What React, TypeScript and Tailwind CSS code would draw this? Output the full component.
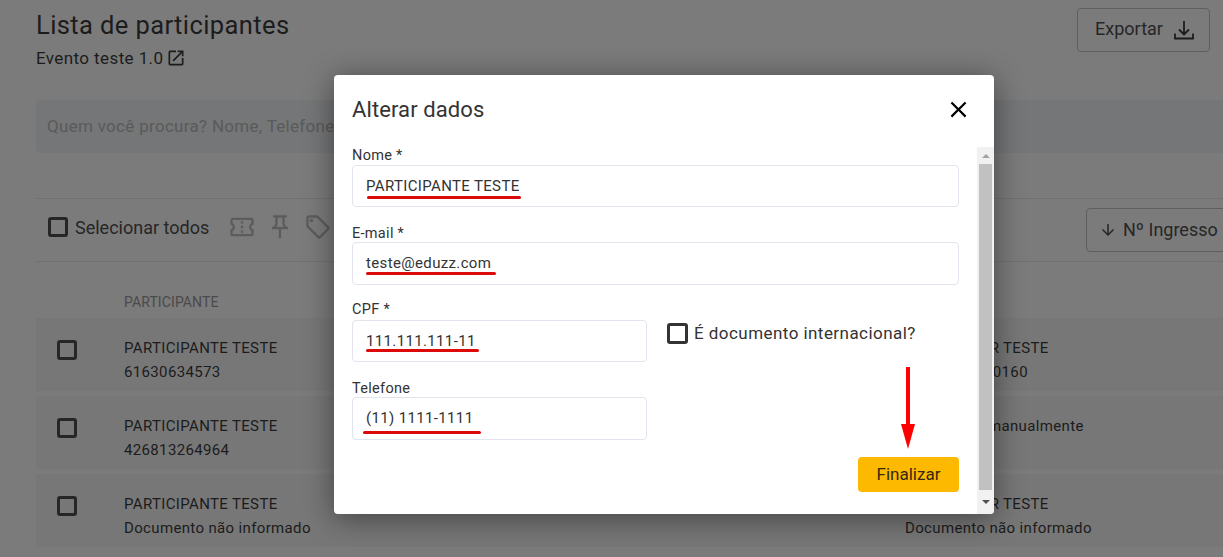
import { MdClose, MdOpenInNew, MdOutlineConfirmationNumber, MdOutlineLocalOffer, MdOutlinePushPin, MdArrowDownward } from 'react-icons/md';

const rows = [
  { name: 'PARTICIPANTE TESTE', doc: '61630634573', buyer: 'COMPRADOR TESTE', buyerDoc: '12345678900160' },
  { name: 'PARTICIPANTE TESTE', doc: '426813264964', buyer: 'Adicionado manualmente', buyerDoc: '' },
  { name: 'PARTICIPANTE TESTE', doc: 'Documento não informado', buyer: 'COMPRADOR TESTE', buyerDoc: 'Documento não informado' },
];

function Checkbox({ color = 'border-[#262626]', size = 'w-5 h-5' }: { color?: string; size?: string }) {
  return <span className={`block shrink-0 rounded-[3px] border-[3px] ${size} ${color}`} />;
}

function Field({ label, value, mark, className, box }: { label: string; value: string; mark: string; className: string; box: string }) {
  return (
    <div className={className}>
      <div className="text-[14.5px] leading-[14px] tracking-[0.3px] text-[#333]">{label}</div>
      <div className={`relative rounded-[4px] border border-[#e3e3ee] pl-[13px] flex items-center text-[15px] tracking-[0.35px] text-[#333] ${box}`}>
        {value}
        <span className={`absolute h-[3px] rounded-full bg-[#dd0a0a] ${mark}`} />
      </div>
    </div>
  );
}

export default function App() {
  return (
    <div className="relative h-[557px] w-[1223px] overflow-hidden bg-[#7b7b7b] font-['Roboto',sans-serif]">
      <div className="pl-9">
        <div className="flex justify-between pr-[13px] pt-2">
          <div>
            <h1 className="text-[25.5px] leading-[34px] tracking-[0.4px] text-[#1c1c1c]">Lista de participantes</h1>
            <div className="mt-[4px] flex items-center gap-[3px] text-[17px] leading-6 tracking-[0.4px] text-[#1c1c1c]">
              Evento teste 1.0
              <MdOpenInNew className="h-5 w-5" />
            </div>
          </div>
          <button className="flex h-11 w-[133px] items-center justify-center gap-[11px] rounded-[4px] border border-[#5f5f5f] pl-[2px] text-[18px] text-[#262626]">
            <span className="-mt-1">Exportar</span>
            <svg viewBox="0 0 20 20" className="h-5 w-5" fill="none" stroke="#1c1c1c" strokeWidth="1.8">
              <path d="M10 1v13M5 9.5l5 5 5-5M1 13.5v5h18v-5" />
            </svg>
          </button>
        </div>

        <div className="mt-[30px] flex h-[53px] items-center rounded-l-[4px] bg-[#747677] pl-[11px] text-[17px] tracking-[0.3px] text-[#5a5a5a]">
          Quem você procura? Nome, Telefone, E-mail
        </div>

        <div className="mt-[45px] flex h-[64px] items-center border-y border-[#717171] pl-3">
          <div className="-mt-[6px] flex items-center">
            <Checkbox />
            <span className="ml-[7px] text-[18px] text-[#262626]">Selecionar todos</span>
            <div className="ml-[19px] flex items-center gap-[10px] text-[#5c5c5c]">
              <MdOutlineConfirmationNumber className="h-7 w-7" />
              <MdOutlinePushPin className="h-7 w-7" />
              <MdOutlineLocalOffer className="h-7 w-7" />
            </div>
          </div>
          <button className="ml-auto -mr-[3px] flex h-11 w-[140px] shrink-0 items-center gap-[6px] rounded-[4px] border border-[#5f5f5f] pl-[12px] text-[18px] text-[#262626]">
            <MdArrowDownward className="h-[18px] w-[18px]" />
            <span className="-mt-[2px]">Nº Ingresso</span>
          </button>
        </div>

        <div className="mt-[32px] pl-[88px] text-[14px] leading-4 tracking-[0.1px] text-[#4a4a4a]">PARTICIPANTE</div>

        <div className="mt-[8px] flex flex-col gap-[5px]">
          {rows.map((row) => (
            <div key={row.doc} className="flex h-[73px] items-center bg-[#777] pl-[21px] text-[15px] leading-[24px] tracking-[0.35px] text-[#1c1c1c]">
              <div className="-mt-[10px]"><Checkbox /></div>
              <div className="ml-[47px] mt-[10px] w-[781px] shrink-0">
                <div>{row.name}</div>
                <div>{row.doc}</div>
              </div>
              <div className="mt-[10px]">
                <div>{row.buyer}</div>
                <div className="h-6">{row.buyerDoc}</div>
              </div>
            </div>
          ))}
        </div>
      </div>

      <div className="absolute left-[334px] top-[75px] h-[439px] w-[660px] overflow-hidden rounded-[4px] bg-white shadow-[0_4px_30px_rgba(0,0,0,0.45)]">
        <div className="flex h-[72px] items-center justify-between pb-1 pl-[18px] pr-[22px]">
          <h2 className="text-[22px] tracking-[0.1px] text-[#333]">Alterar dados</h2>
          <MdClose className="h-[27px] w-[27px] text-black" />
        </div>

        <div className="flex h-[367px]">
          <div className="w-[643px] px-[18px] pt-[2px]">
            <Field label="Nome *" value="PARTICIPANTE TESTE" mark="left-[14px] top-[30px] w-[154px]" className="" box="mt-[2px] h-[42px]" />
            <Field label="E-mail *" value="teste@eduzz.com" mark="left-[13px] top-[29px] w-[130px]" className="mt-[20px]" box="mt-[1px] h-[43px]" />
            <div className="mt-[18px] flex">
              <div className="w-[295px]">
                <Field label="CPF *" value="111.111.111-11" mark="left-[13px] top-[28px] w-[113px]" className="" box="mt-[3px] h-[42px]" />
                <Field label="Telefone" value="(11) 1111-1111" mark="left-[10px] top-[33px] w-[118px]" className="mt-[20px]" box="mt-[1px] h-[43px]" />
              </div>
              <div className="ml-[20px] mt-[20px] flex h-[21px] items-center gap-[6px] text-[17px] tracking-[0.45px] text-[#333]">
                <Checkbox color="border-[#333]" size="w-[21px] h-[21px]" />
                É documento internacional?
              </div>
            </div>
            <div className="mt-[17px] flex justify-end">
              <button className="h-[35px] w-[101px] rounded-[4px] bg-[#fdb900] text-[17px] text-[#332a10]">Finalizar</button>
            </div>
          </div>

          <div className="flex w-[17px] flex-col items-center bg-[#f1f1f1]">
            <div className="flex h-[17px] w-full items-center justify-center">
              <span className="border-x-[4px] border-b-[4px] border-x-transparent border-b-[#a3a3a3]" />
            </div>
            <div className="h-[326px] w-[13px] bg-[#c1c1c1]" />
            <div className="flex w-full flex-1 items-center justify-center">
              <span className="border-x-[4px] border-t-[4px] border-x-transparent border-t-[#505050]" />
            </div>
          </div>
        </div>

        <svg viewBox="0 0 16 84" className="absolute left-[566px] top-[291px] h-[84px] w-4">
          <path d="M6 1h4v58H6z" fill="#f00" />
          <path d="M1 58h14L8 83z" fill="#f00" />
        </svg>
      </div>
    </div>
  );
}
